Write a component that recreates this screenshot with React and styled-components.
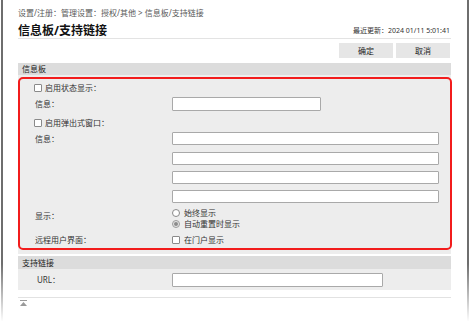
import React from "react";
import styled, { createGlobalStyle } from "styled-components";

const GlobalStyle = createGlobalStyle`
  html, body {
    margin: 0;
    padding: 0;
    background: #fff;
  }
  body {
    font-family: "Noto Sans", "Noto Sans CJK SC", sans-serif;
    color: #333;
  }
  * {
    box-sizing: border-box;
  }
`;

function UpIcon() {
  return (
    <svg width="7" height="6" viewBox="0 0 7 6">
      <rect x="0" y="0" width="7" height="1" fill="#9a9a9a" />
      <polygon points="3.5,2 7,6 0,6" fill="#9a9a9a" />
    </svg>
  );
}

export default function App() {
  return (
    <>
      <GlobalStyle />
      <Frame>
        <Breadcrumb>设置/注册：管理设置：授权/其他 &gt; 信息板/支持链接</Breadcrumb>
        <TitleBar>
          <Title>信息板/支持链接</Title>
          <Updated>最近更新：2024 01/11 5:01:41</Updated>
        </TitleBar>
        <ButtonBar>
          <Button>确定</Button>
          <Button>取消</Button>
        </ButtonBar>

        <SectionHeader>信息板</SectionHeader>
        <Panel>
          <Highlight>
            <Row $h={18}>
              <CheckLabel>
                <CheckBox />
                启用状态显示：
              </CheckLabel>
            </Row>
            <Row $h={14}>
              <Label>信息：</Label>
              <TextInput $w={149} $h={14} />
            </Row>
            <Row $h={21} $pt={3}>
              <CheckLabel>
                <CheckBox />
                启用弹出式窗口：
              </CheckLabel>
            </Row>
            <Row $top>
              <Label $lh={13}>信息：</Label>
              <Fields>
                <TextInput $w={267} $h={13} />
                <FieldGroup>
                  <TextInput $w={267} $h={13} />
                  <TextInput $w={267} $h={13} />
                  <TextInput $w={267} $h={13} />
                </FieldGroup>
              </Fields>
            </Row>
            <Row $top $pt={4}>
              <Label $mt={3}>显示：</Label>
              <RadioGroup>
                <RadioLabel>
                  <Radio />
                  始终显示
                </RadioLabel>
                <RadioLabel>
                  <Radio $checked />
                  自动重置时显示
                </RadioLabel>
              </RadioGroup>
            </Row>
            <Row $h={19} $pt={2}>
              <Label>远程用户界面：</Label>
              <RadioLabel>
                <CheckBox />
                在门户显示
              </RadioLabel>
            </Row>
          </Highlight>
        </Panel>

        <SectionHeader $gap={2} $h={13}>支持链接</SectionHeader>
        <UrlRow>
          <Label $indent={2}>URL：</Label>
          <TextInput $w={211} $h={14} />
        </UrlRow>

        <Footer>
          <UpIcon />
        </Footer>
      </Frame>
    </>
  );
}

const Frame = styled.div`
  width: 468px;
  height: 321px;
  margin-left: 1px;
  border-style: solid;
  border-width: 0 2px;
  border-image: linear-gradient(to bottom, #6e6e6e 0%, #6e6e6e 82%, #ffffff 100%) 1;
  padding: 0 16px 0 15px;
  overflow: hidden;
`;

const Breadcrumb = styled.div`
  padding-top: 7px;
  font-size: 8px;
  line-height: 12px;
  color: #5a5a5a;
  white-space: nowrap;
`;

const TitleBar = styled.div`
  display: flex;
  justify-content: space-between;
  align-items: flex-end;
  margin-top: 5px;
  height: 15px;
  border-bottom: 1px solid #e3e3e3;
`;

const Title = styled.h1`
  margin: 0;
  font-size: 12px;
  font-weight: 700;
  line-height: 14px;
  color: #111;
`;

const Updated = styled.span`
  font-size: 7px;
  line-height: 12px;
  padding-right: 1px;
  padding-bottom: 1px;
  color: #333;
`;

const ButtonBar = styled.div`
  display: flex;
  justify-content: flex-end;
  gap: 3px;
  margin-top: 4px;
  padding-right: 1px;
`;

const Button = styled.button`
  width: 54px;
  height: 15px;
  padding: 0;
  border: none;
  background: #e6e6e6;
  font-family: inherit;
  font-size: 8px;
  line-height: 15px;
  color: #222;
`;

const SectionHeader = styled.div`
  margin-top: ${(p) => p.$gap ?? 5}px;
  height: ${(p) => p.$h ?? 12}px;
  line-height: ${(p) => p.$h ?? 12}px;
  padding-left: 4px;
  background: #dcdcdc;
  font-size: 8px;
  color: #222;
`;

const Panel = styled.div`
  background: #ededed;
  padding: 2px 0 4px;
`;

const Highlight = styled.div`
  margin-right: -1px;
  border: 2px solid #f21c1c;
  border-radius: 5px;
  padding-left: 14px;
`;

const Row = styled.div`
  display: flex;
  align-items: ${(p) => (p.$top ? "flex-start" : "center")};
  height: ${(p) => (p.$h ? `${p.$h}px` : "auto")};
  padding-top: ${(p) => p.$pt ?? 0}px;
  font-size: 8px;
`;

const Label = styled.div`
  width: ${(p) => 137 - (p.$indent ?? 0)}px;
  margin-left: ${(p) => (p.$indent ?? 0) + 1}px;
  margin-top: ${(p) => p.$mt ?? 0}px;
  flex-shrink: 0;
  font-size: 8px;
  line-height: ${(p) => p.$lh ?? 12}px;
  color: #333;
`;

const CheckLabel = styled.label`
  display: flex;
  align-items: center;
  gap: 3px;
  font-size: 8px;
  line-height: 12px;
  color: #333;
`;

const CheckBox = styled.span`
  display: inline-block;
  width: 8px;
  height: 8px;
  border: 1px solid #8a8a8a;
  border-radius: 1px;
  background: #fff;
`;

const TextInput = styled.div`
  width: ${(p) => p.$w}px;
  height: ${(p) => p.$h}px;
  border: 1px solid #a9a9a9;
  border-radius: 1px;
  background: #fff;
`;

const Fields = styled.div`
  display: flex;
  flex-direction: column;
`;

const FieldGroup = styled.div`
  display: flex;
  flex-direction: column;
  gap: 6px;
  margin-top: 7px;
`;

const RadioGroup = styled.div`
  display: flex;
  flex-direction: column;
`;

const RadioLabel = styled.label`
  display: flex;
  align-items: center;
  gap: 4px;
  font-size: 8px;
  line-height: 11px;
  color: #333;
`;

const Radio = styled.span`
  position: relative;
  display: inline-block;
  width: 8px;
  height: 8px;
  border-radius: 50%;
  border: 1px solid ${(p) => (p.$checked ? "#9c9c9c" : "#8a8a8a")};
  background: ${(p) => (p.$checked ? "#e6e6e6" : "#fff")};

  &::after {
    content: "";
    display: ${(p) => (p.$checked ? "block" : "none")};
    position: absolute;
    left: 1px;
    top: 1px;
    width: 4px;
    height: 4px;
    border-radius: 50%;
    background: #8c8c8c;
  }
`;

const UrlRow = styled.div`
  display: flex;
  align-items: center;
  height: 21px;
  padding-left: 16px;
  background: #ededed;
`;

const Footer = styled.div`
  margin-top: 7px;
  padding: 2px 0 0 2px;
  border-top: 1px solid #e2e2e2;
  display: flex;
`;
